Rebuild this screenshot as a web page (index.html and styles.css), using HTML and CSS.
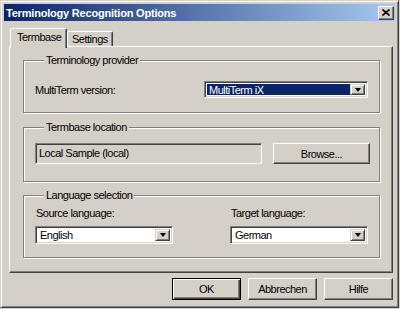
FILE: index.html
```html
<!DOCTYPE html>
<html lang="en">
<head>
    <meta charset="UTF-8">
    <title>Terminology Recognition Options</title>
    <link rel="stylesheet" href="styles.css">
</head>
<body>
    <div class="window">
        <div class="titlebar">
            <span class="title">Terminology Recognition Options</span>
            <button class="close-button">
                <svg width="8" height="7" viewBox="0 0 8 7"><path d="M0.5 0.5 L7.5 6.5 M7.5 0.5 L0.5 6.5" stroke="#000" stroke-width="1.6"/></svg>
            </button>
        </div>

        <div class="tabs">
            <div class="tab active">Termbase</div>
            <div class="tab">Settings</div>
        </div>

        <div class="panel">
            <div class="group provider">
                <div class="group-title">Terminology provider</div>
                <div class="row">
                    <span>MultiTerm version:</span>
                    <div class="combo wide selected">
                        <span class="combo-text">MultiTerm iX</span>
                        <span class="combo-arrow"></span>
                    </div>
                </div>
            </div>

            <div class="group location">
                <div class="group-title">Termbase location</div>
                <div class="row">
                    <div class="textbox">Local Sample (local)</div>
                    <button class="win-button browse">Browse...</button>
                </div>
            </div>

            <div class="group language">
                <div class="group-title">Language selection</div>
                <div class="lang-grid">
                    <div class="lang-col">
                        <span class="lang-label">Source language:</span>
                        <div class="combo">
                            <span class="combo-text">English</span>
                            <span class="combo-arrow"></span>
                        </div>
                    </div>
                    <div class="lang-col">
                        <span class="lang-label">Target language:</span>
                        <div class="combo">
                            <span class="combo-text">German</span>
                            <span class="combo-arrow"></span>
                        </div>
                    </div>
                </div>
            </div>
        </div>

        <div class="dialog-buttons">
            <button class="win-button default">OK</button>
            <button class="win-button">Abbrechen</button>
            <button class="win-button">Hilfe</button>
        </div>
    </div>
</body>
</html>
```

FILE: styles.css
```css
body {
    margin: 0;
    padding: 0;
    background-color: #d4d0c8;
    font-family: "Liberation Sans", Arial, sans-serif;
    font-size: 11px;
    letter-spacing: -0.5px;
    color: #000;
}

.window {
    width: 399px;
    height: 308px;
    box-sizing: border-box;
    padding: 3px;
    background-color: #d4d0c8;
    border: 1px solid;
    border-color: #d4d0c8 #404040 #404040 #d4d0c8;
    box-shadow: inset 1px 1px 0 #fff, inset -1px -1px 0 #808080;
}

.titlebar {
    height: 17px;
    display: flex;
    align-items: center;
    justify-content: space-between;
    padding: 0 1px 0 2px;
    background: linear-gradient(to right, #0a246a, #a6caf0);
}

.title {
    color: #fff;
    font-weight: bold;
    font-size: 11px;
    letter-spacing: -0.2px;
}

.close-button {
    width: 16px;
    height: 14px;
    padding: 0;
    display: flex;
    align-items: center;
    justify-content: center;
    background-color: #d4d0c8;
    border: 1px solid;
    border-color: #fff #404040 #404040 #fff;
    box-shadow: inset -1px -1px 0 #808080;
}

.tabs {
    display: flex;
    align-items: flex-start;
    height: 18px;
    margin: 7px 0 0 6px;
    position: relative;
    z-index: 1;
}

.tab {
    height: 15px;
    margin-top: 3px;
    padding: 0 4px;
    line-height: 15px;
    box-sizing: border-box;
    background-color: #d4d0c8;
    border-top: 1px solid #fff;
    border-left: 1px solid #fff;
    border-right: 1px solid #404040;
    border-radius: 2px 2px 0 0;
    box-shadow: inset -1px 0 0 #808080;
}

.tab.active {
    height: 20px;
    margin-top: 0;
    width: 57px;
    padding: 0 0 0 6px;
    line-height: 17px;
}

.panel {
    height: 227px;
    box-sizing: border-box;
    margin: 0 2px 0 5px;
    border: 1px solid;
    border-color: #fff #404040 #404040 #fff;
    box-shadow: inset -1px -1px 0 #808080;
    padding: 13px 12px 0 13px;
}

.group {
    border: 1px solid #808080;
    box-shadow: inset 1px 1px 0 #fff, 1px 1px 0 #fff;
    padding: 0 11px;
}

.group-title {
    width: fit-content;
    height: 13px;
    line-height: 13px;
    margin: -7px 0 0 9px;
    padding: 0 2px;
    background-color: #d4d0c8;
}

.provider .row {
    display: flex;
    justify-content: space-between;
    align-items: center;
    margin-top: 14px;
    padding-bottom: 14px;
}

.location {
    margin-top: 14px;
}

.location .row {
    display: flex;
    gap: 11px;
    margin-top: 9px;
    padding-bottom: 17px;
}

.language {
    margin-top: 13px;
}

.lang-grid {
    display: grid;
    grid-template-columns: 138px 138px;
    justify-content: space-between;
    margin-top: 5px;
    padding-bottom: 13px;
}

.lang-label {
    display: block;
    height: 13px;
    line-height: 13px;
    margin-bottom: 6px;
    padding-left: 1px;
}

.combo {
    height: 18px;
    box-sizing: border-box;
    display: flex;
    align-items: center;
    background-color: #fff;
    border: 1px solid;
    border-color: #808080 #fff #fff #808080;
    box-shadow: inset 1px 1px 0 #404040, inset -1px -1px 0 #d4d0c8;
    padding: 2px;
}

.combo.wide {
    width: 164px;
    height: 17px;
}

.combo-text {
    flex: 1;
    height: 100%;
    line-height: 12px;
    padding-left: 2px;
}

.combo.selected .combo-text {
    background-color: #0a246a;
    color: #fff;
}

.combo-arrow {
    width: 15px;
    height: 100%;
    box-sizing: border-box;
    background-color: #d4d0c8;
    border: 1px solid;
    border-color: #d4d0c8 #404040 #404040 #d4d0c8;
    box-shadow: inset 1px 1px 0 #fff, inset -1px -1px 0 #808080;
    display: flex;
    align-items: center;
    justify-content: center;
}

.combo-arrow::after {
    content: "";
    border-left: 3px solid transparent;
    border-right: 3px solid transparent;
    border-top: 4px solid #000;
}

.textbox {
    flex: 1;
    height: 21px;
    box-sizing: border-box;
    padding-left: 3px;
    line-height: 19px;
    border: 1px solid;
    border-color: #808080 #fff #fff #808080;
    box-shadow: inset 1px 1px 0 #404040, inset -1px -1px 0 #d4d0c8;
}

.win-button {
    height: 21px;
    box-sizing: border-box;
    padding: 0;
    background-color: #d4d0c8;
    font-family: "Liberation Sans", Arial, sans-serif;
    font-size: 11px;
    letter-spacing: -0.5px;
    color: #000;
    border: 1px solid;
    border-color: #fff #404040 #404040 #fff;
    box-shadow: inset -1px -1px 0 #808080;
}

.browse {
    width: 97px;
    margin-right: -2px;
}

.dialog-buttons {
    display: flex;
    justify-content: flex-end;
    gap: 7px;
    margin: 5px 2px 0 0;
}

.dialog-buttons .win-button {
    width: 69px;
    height: 22px;
}

.win-button.default {
    border: 1px solid #000;
    box-shadow: inset 1px 1px 0 #fff, inset -1px -1px 0 #404040, inset -2px -2px 0 #808080;
}
```
